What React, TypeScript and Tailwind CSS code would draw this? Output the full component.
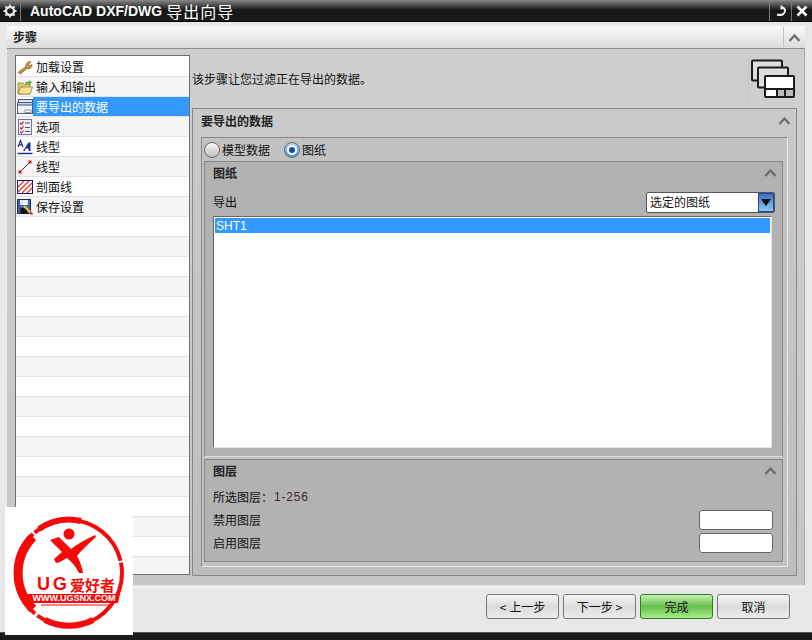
const font = { fontFamily: '"Noto Sans CJK SC", "Liberation Sans", sans-serif' };

function Chevron({ className = '' }: { className?: string }) {
  return (
    <svg className={className} width="13" height="9" viewBox="0 0 13 9" fill="none">
      <path d="M1.5 8L6.5 2.5L11.5 8" stroke="#6e6e6e" strokeWidth="2.4" />
    </svg>
  );
}

function WrenchIcon() {
  return (
    <svg width="16" height="16" viewBox="0 0 16 16">
      <path d="M2 12.5L9 7.5C8.5 4.5 11 2 14 3L11.5 5L13 7L15 5.5C15.5 8.5 12.5 10.5 10 9.5L4 14.5C2.5 15.5 0.5 13.5 2 12.5Z" fill="#c8963c" stroke="#7a5518" strokeWidth="0.7" />
    </svg>
  );
}

function FolderIcon() {
  return (
    <svg width="16" height="16" viewBox="0 0 16 16">
      <path d="M1 4H6L7 5.5H13V15H1Z" fill="#e8c860" stroke="#8a7430" strokeWidth="0.7" />
      <path d="M1.5 15L3.5 8H15.5L13 15Z" fill="#f6e39a" stroke="#8a7430" strokeWidth="0.7" />
      <path d="M8 3L12 2.5V1L15 3.5L12 6V4.5L9 5Z" fill="#4caf3c" />
    </svg>
  );
}

function DataIcon() {
  return (
    <svg width="16" height="17" viewBox="0 0 16 17">
      <rect x="1.5" y="1.5" width="14" height="5" fill="#dfe6f2" stroke="#4b5a78" />
      <rect x="0.5" y="4.5" width="15" height="11" fill="#eef2f8" stroke="#4b5a78" />
      <rect x="0.5" y="4.5" width="15" height="2.5" fill="#c4d0e4" stroke="#4b5a78" />
      <rect x="8" y="12" width="6" height="2.5" fill="#fff" stroke="#4b5a78" strokeWidth="0.6" />
    </svg>
  );
}

function OptionsIcon() {
  return (
    <svg width="16" height="16" viewBox="0 0 16 16">
      <rect x="1.5" y="0.5" width="13" height="15" fill="#eef0fb" stroke="#6a72b8" />
      <path d="M3 4L4.5 5.5L6.5 2.5M3 8.5L4.5 10L6.5 7M3 13L4.5 14L6.5 11.5" stroke="#c62828" strokeWidth="1.2" fill="none" />
      <path d="M8 4H13M8 8.5H13M8 12.5H13" stroke="#555" strokeWidth="1" />
    </svg>
  );
}

function FontLineIcon() {
  return (
    <svg width="16" height="16" viewBox="0 0 16 16">
      <path d="M1 8L3.5 1.5L6 8M2 5.8H5" stroke="#1b2f9c" strokeWidth="1.2" fill="none" />
      <path d="M6 12L11.5 3.5H13.5V12H11.5V9.5H9L7.5 12Z" fill="#1b2f9c" />
      <path d="M0.5 14.5H15.5" stroke="#1b2f9c" strokeWidth="1.5" />
    </svg>
  );
}

function LineIcon() {
  return (
    <svg width="16" height="16" viewBox="0 0 16 16">
      <path d="M3 13L13 3" stroke="#333" strokeWidth="1" />
      <rect x="1.5" y="11.5" width="3" height="3" fill="#d32020" />
      <rect x="11.5" y="1.5" width="3" height="3" fill="#d32020" />
    </svg>
  );
}

function HatchIcon() {
  return (
    <svg width="16" height="14" viewBox="0 0 16 14">
      <rect x="0.5" y="0.5" width="15" height="13" fill="#fff" stroke="#15156e" />
      <path d="M1 7L7 1M1 12L12 1M5 13L15 3M10 13L15 8" stroke="#e0342c" strokeWidth="1.3" />
    </svg>
  );
}

function SaveIcon() {
  return (
    <svg width="16" height="16" viewBox="0 0 16 16">
      <rect x="0.5" y="0.5" width="13" height="14" fill="#3f63a8" stroke="#1d2f60" />
      <rect x="3" y="1" width="8" height="5" fill="#e8eef8" />
      <rect x="3.5" y="9" width="7" height="5.5" fill="#111" />
      <path d="M7 7L14 14" stroke="#e8c040" strokeWidth="2.4" />
      <path d="M13 13L15.5 15.5" stroke="#d04030" strokeWidth="2" />
    </svg>
  );
}

function SheetsIcon() {
  return (
    <svg width="46" height="40" viewBox="0 0 46 40" fill="#dedede" stroke="#1a1a1a" strokeWidth="2">
      <rect x="2" y="1.5" width="30" height="20" rx="1" />
      <rect x="8" y="8.5" width="30" height="20" rx="1" />
      <rect x="15" y="17" width="29" height="21" rx="1" fill="#fff" />
      <path d="M15 30H27V38M27 30H44M35 30V38" fill="none" />
      <rect x="28" y="31" width="6" height="6" fill="#bbb" stroke="none" />
      <rect x="36" y="31" width="7" height="6" fill="#bbb" stroke="none" />
    </svg>
  );
}

function LogoBadge() {
  return (
    <div className="absolute left-[5px] top-[507px] h-[128px] w-[128px] bg-white">
      <svg className="absolute left-0 top-0" width="128" height="128" viewBox="0 0 128 128">
        <circle cx="64" cy="66" r="53" fill="none" stroke="#f50a0a" strokeWidth="4" strokeDasharray="70 2 45 3 90 2 35 3" />
        <path d="M28 30A51 51 0 0 0 28 102" fill="none" stroke="#f50a0a" strokeWidth="9" />
        <path d="M40 113A53 53 0 0 0 88 113" fill="none" stroke="#f50a0a" strokeWidth="6" />
        <path d="M34 22A53 53 0 0 1 76 14" fill="none" stroke="#f50a0a" strokeWidth="6" />
        <circle cx="64" cy="27" r="5.5" fill="#f50a0a" />
        <path d="M45 33L54 30L66 42C72 37 80 33 90 28L91 30C84 36 77 43 72 49C75 54 77 60 78 66H74C71 60 67 55 62 51C58 53 54 56 51 56L49 52L57 45Z" fill="#f50a0a" />
        <path d="M21 87H115L113 96H28Z" fill="#f50a0a" />
        <path d="M36 98H108" stroke="#f50a0a" strokeWidth="1" />
      </svg>
      <div className="absolute left-[32px] top-[67px] flex h-[20px] w-[84px] items-center whitespace-nowrap text-[15px] font-bold leading-none text-[#f50a0a]">
        <span className="w-[33px] font-['Liberation_Sans'] text-[18px] tracking-[3px]">UG</span>
        <span>爱好者</span>
      </div>
      <div className="absolute left-[23px] top-[86px] w-[92px] whitespace-nowrap text-center font-['Liberation_Sans'] text-[9px] font-bold leading-[11px] text-white">
        WWW.UGSNX.COM
      </div>
    </div>
  );
}

const steps = [
  { label: '加载设置', icon: <WrenchIcon /> },
  { label: '输入和输出', icon: <FolderIcon /> },
  { label: '要导出的数据', icon: <DataIcon />, active: true },
  { label: '选项', icon: <OptionsIcon /> },
  { label: '线型', icon: <FontLineIcon /> },
  { label: '线型', icon: <LineIcon /> },
  { label: '剖面线', icon: <HatchIcon /> },
  { label: '保存设置', icon: <SaveIcon /> },
];

const emptyRows = Array.from({ length: 18 }, (_, i) => i);

function StepList() {
  return (
    <div className="h-[520px] w-[175px] shrink-0 overflow-hidden border border-[#6e6e6e] bg-white pt-[1px]">
      {steps.map((s, i) => (
        <div
          key={i}
          className={`flex h-[20px] items-center border-b border-[#e2e2e2] pl-[1px] text-[12px] leading-none ${i % 2 ? 'bg-[#f5f5f5]' : 'bg-white'}`}
        >
          <span className="flex w-[16px] shrink-0 items-center justify-center">{s.icon}</span>
          <span className={`flex h-[19px] flex-1 items-center pl-[3px] ${s.active ? 'bg-[#3399ff] text-white' : 'text-[#111]'}`}>
            {s.label}
          </span>
        </div>
      ))}
      {emptyRows.map((i) => (
        <div key={i} className={`h-[20px] border-b border-[#e2e2e2] ${i % 2 ? 'bg-[#f5f5f5]' : 'bg-white'}`} />
      ))}
    </div>
  );
}

function Radio({ checked, label }: { checked?: boolean; label: string }) {
  return (
    <div className="flex items-center gap-[2px] text-[12px] text-[#111]">
      {checked ? (
        <span className="flex h-[16px] w-[16px] items-center justify-center rounded-full border border-[#666] bg-gradient-to-b from-[#a8d8f8] to-[#3f9be8]">
          <span className="flex h-[10px] w-[10px] items-center justify-center rounded-full bg-white">
            <span className="h-[6px] w-[6px] rounded-full bg-[#1c46b8]" />
          </span>
        </span>
      ) : (
        <span className="h-[16px] w-[16px] rounded-full border border-[#666] bg-gradient-to-b from-[#f8f8f8] to-[#c0c0c0]" />
      )}
      {label}
    </div>
  );
}

function WizardButton({ children, primary }: { children: React.ReactNode; primary?: boolean }) {
  return (
    <button
      className={`h-[25px] w-[73px] rounded-[3px] border text-[12px] leading-none text-[#111] ${
        primary
          ? 'border-[#2e7d2e] bg-gradient-to-b from-[#c8f0b0] via-[#66c04e] to-[#a8ee88]'
          : 'border-[#777] bg-gradient-to-b from-[#f6f6f6] via-[#dcdcdc] to-[#ececec]'
      }`}
    >
      {children}
    </button>
  );
}

export default function App() {
  return (
    <div className="relative h-[640px] w-[812px] overflow-hidden bg-[#e8e8e8]" style={font}>
      {/* Title bar */}
      <div className="flex h-[22px] items-center border-b border-black bg-gradient-to-b from-[#8a8a8a] via-[#151515] to-[#1c1c1c]">
        <span className="flex h-[21px] w-[21px] items-center justify-center border-r border-[#777] text-white">
          <svg width="14" height="14" viewBox="0 0 14 14">
            <circle cx="7" cy="7" r="4" fill="none" stroke="#e8e8e8" strokeWidth="2.4" />
            <path d="M7 0.5V3M7 11V13.5M0.5 7H3M11 7H13.5M2.4 2.4L4 4M10 10L11.6 11.6M2.4 11.6L4 10M10 4L11.6 2.4" stroke="#e8e8e8" strokeWidth="1.8" />
          </svg>
        </span>
        <span className="ml-[9px] flex flex-1 items-center gap-[4px] text-white">
          <span className="font-['Liberation_Sans'] text-[14px] font-bold leading-none">AutoCAD DXF/DWG</span>
          <span className="text-[16px] leading-none tracking-[1px]">导出向导</span>
        </span>
        <span className="flex h-[21px] w-[22px] items-center justify-center border-l border-[#777]">
          <svg width="12" height="12" viewBox="0 0 12 12" fill="none">
            <path d="M2 9.5C7 11 10 8.5 10 6C10 4 8.5 2.5 6.5 2.5M6.5 0.5V4.5" stroke="#eee" strokeWidth="2" />
          </svg>
        </span>
        <span className="flex h-[21px] w-[21px] items-center justify-center border-l border-[#777]">
          <svg width="12" height="12" viewBox="0 0 12 12" fill="none">
            <path d="M1.5 1.5L10.5 10.5M10.5 1.5L1.5 10.5" stroke="#fff" strokeWidth="2.6" />
          </svg>
        </span>
      </div>

      <div className="mx-[7px] mt-[4px] w-[798px]">
        {/* Steps header */}
        <div className="flex h-[23px] items-center justify-between border-b border-[#8c8c8c] bg-gradient-to-b from-[#fafafa] to-[#dcdcdc] pl-[6px] text-[12px] font-bold text-[#222]">
          步骤
          <span className="flex h-[20px] w-[22px] items-center justify-center border-l border-[#c0c0c0]">
            <Chevron />
          </span>
        </div>

        {/* Main group */}
        <div className="flex h-[536px] gap-[2px] border-r-[1px] border-[#aaa] bg-gradient-to-b from-[#cfcfcf] to-[#c6c6c6] pl-[8px] pt-[6px]">
          <StepList />
          <div className="flex-1 pr-[7px]">
            <div className="flex h-[53px] items-center justify-between pb-[6px] text-[12px] text-[#111]">
              <span>该步骤让您过滤正在导出的数据。</span>
              <span className="mr-[1px] flex h-[44px] w-[48px] items-center justify-end border-l border-[#c4c4c4]">
                <SheetsIcon />
              </span>
            </div>

            {/* Section */}
            <div className="h-[468px] w-[605px] border border-[#888] bg-gradient-to-b from-[#cacaca] to-[#bdbdbd] pl-[8px] pr-[8px]">
              <div className="flex h-[28px] items-center justify-between pb-[5px] text-[12px] font-bold text-[#222]">
                要导出的数据
                <Chevron className="-mr-[3px]" />
              </div>
              <div className="h-[430px] border border-[#888] border-b-[#e8e8e8] border-r-[#e8e8e8] bg-[#c2c2c2] pl-[2px] pr-[4px]">
                <div className="flex h-[23px] items-center gap-[14px]">
                  <Radio label="模型数据" />
                  <Radio checked label="图纸" />
                </div>

                {/* Sheet panel */}
                <div className="h-[296px] border border-[#888] border-b-[#dedede] bg-[#b2b2b2] px-[8px]">
                  <div className="flex h-[23px] items-center justify-between pb-[2px] text-[12px] font-bold text-[#222]">
                    图纸
                    <Chevron className="-mr-[3px]" />
                  </div>
                  <div className="flex h-[31px] items-center justify-between pt-[3px] text-[12px] text-[#111]">
                    导出
                    <div className="-mr-[1px] flex h-[21px] w-[129px] items-stretch overflow-hidden rounded-[2px] border border-[#555] bg-white">
                      <span className="flex flex-1 items-center pl-[3px]">选定的图纸</span>
                      <span className="flex w-[16px] items-center justify-center border border-[#26469a] bg-gradient-to-b from-[#3f6fc0] to-[#8cc8f0]">
                        <svg width="10" height="7" viewBox="0 0 10 7">
                          <path d="M0 0H10L5 7Z" fill="#111" />
                        </svg>
                      </span>
                    </div>
                  </div>
                  <div className="h-[232px] w-[559px] border border-[#666] border-b-[#e4e4e4] border-r-[#e4e4e4] bg-white p-[1px]">
                    <div className="flex h-[15px] items-center bg-[#3399ff] pl-[1px] font-['Liberation_Sans'] text-[12px] leading-none text-white">
                      SHT1
                    </div>
                  </div>
                </div>

                {/* Layers panel */}
                <div className="mt-[2px] h-[103px] border border-[#888] bg-[#b2b2b2] px-[8px]">
                  <div className="flex h-[23px] items-center justify-between pb-[2px] text-[12px] font-bold text-[#222]">
                    图层
                    <Chevron className="-mr-[3px]" />
                  </div>
                  <div className="flex h-[25px] items-center pt-[3px] text-[12px] text-[#111]">
                    所选图层：<span className="ml-[1px] font-['Liberation_Sans'] tracking-[0.8px] text-[#3a2a2a]">1-256</span>
                  </div>
                  <div className="flex h-[23px] items-center justify-between text-[12px] text-[#111]">
                    禁用图层
                    <span className="mr-[1px] h-[20px] w-[74px] rounded-[3px] border border-[#666] bg-white" />
                  </div>
                  <div className="flex h-[23px] items-center justify-between text-[12px] text-[#111]">
                    启用图层
                    <span className="mr-[1px] h-[20px] w-[74px] rounded-[3px] border border-[#666] bg-white" />
                  </div>
                </div>
              </div>
            </div>
          </div>
        </div>
      </div>

      {/* Footer buttons */}
      <div className="mx-[7px] mt-[2px] flex justify-end gap-[4px] border-t border-[#f7f7f7] pr-[15px] pt-[6px]">
        <WizardButton>&lt; 上一步</WizardButton>
        <WizardButton>下一步 &gt;</WizardButton>
        <WizardButton primary>完成</WizardButton>
        <WizardButton>取消</WizardButton>
      </div>

      <div className="absolute bottom-0 left-0 h-[8px] w-full border-t border-[#555] bg-[#1a1a1a]" />
      <LogoBadge />
    </div>
  );
}
